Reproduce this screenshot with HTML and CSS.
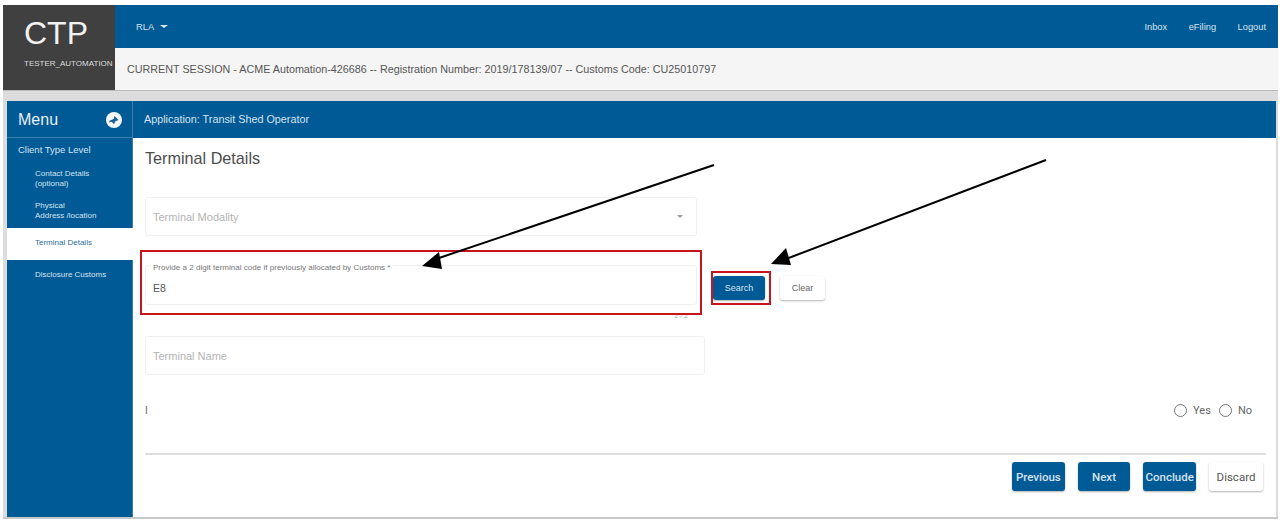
FILE: index.html
```html
<!DOCTYPE html>
<html lang="en">
<head>
<meta charset="utf-8">
<title>CTP - Terminal Details</title>
<link rel="stylesheet" href="styles.css">
</head>
<body>
<div class="app">
  <header class="header">
    <div class="logo">
      <div class="logo-title">CTP</div>
      <div class="logo-user">TESTER_AUTOMATION</div>
    </div>
    <div class="header-main">
      <div class="topbar">
        <div class="org">RLA <span class="caret"></span></div>
        <nav class="toplinks"><span>Inbox</span><span>eFiling</span><span>Logout</span></nav>
      </div>
      <div class="session">CURRENT SESSION - ACME Automation-426686 -- Registration Number: 2019/178139/07 -- Customs Code: CU25010797</div>
    </div>
  </header>
  <div class="workspace">
    <aside class="menu">
      <div class="menu-head">
        <span>Menu</span>
        <svg class="menu-icon" width="16" height="16" viewBox="0 0 16 16"><circle cx="8" cy="8" r="8" fill="#f4f7fa"/><path d="M3.5 8.8 7.6 7 8.6 4l3.9 4-3.4 1.4-1 2.8-2.4-2.4-2.6.8z" fill="#1f5f8f"/></svg>
      </div>
      <div class="menu-level">Client Type Level</div>
      <div class="menu-item two">Contact Details<br>(optional)</div>
      <div class="menu-item two phys">Physical<br>Address /location</div>
      <div class="menu-item active">Terminal Details</div>
      <div class="menu-item last">Disclosure Customs</div>
    </aside>
    <main class="content">
      <div class="app-bar">Application: Transit Shed Operator</div>
      <div class="form">
        <h1 class="title">Terminal Details</h1>
        <div class="field select">
          <span class="placeholder">Terminal Modality</span>
          <span class="select-caret"></span>
        </div>
        <div class="code-row">
          <div class="code-col">
            <div class="field code">
              <span class="legend">Provide a 2 digit terminal code if previously allocated by Customs *</span>
              <span class="value">E8</span>
            </div>
            <div class="counter">2 / 2</div>
          </div>
          <button class="btn primary small search">Search</button>
          <button class="btn small clear">Clear</button>
        </div>
        <div class="field name"><span class="placeholder">Terminal Name</span></div>
        <div class="radio-row">
          <span class="cursor">I</span>
          <div class="radios">
            <span class="radio"></span><span class="radio-label">Yes</span>
            <span class="radio"></span><span class="radio-label">No</span>
          </div>
        </div>
        <div class="actions">
          <button class="btn primary big">Previous</button>
          <button class="btn primary big">Next</button>
          <button class="btn primary big">Conclude</button>
          <button class="btn big discard">Discard</button>
        </div>
      </div>
    </main>
  </div>
</div>
<div class="mark mark-field"></div>
<div class="mark mark-search"></div>
<svg class="arrows" width="1288" height="527" viewBox="0 0 1288 527">
  <path d="M714 165 436 259" stroke="#000" stroke-width="2" fill="none"/>
  <path d="M422 266 439 252 442 269z" fill="#000"/>
  <path d="M1046 160 786 259" stroke="#000" stroke-width="2" fill="none"/>
  <path d="M771 264 786 248 791 265z" fill="#000"/>
</svg>
</body>
</html>
```
FILE: styles.css
```css
* { box-sizing: border-box; }
html, body { margin: 0; height: 527px; overflow: hidden; background: #fff; }
body { font-family: "Liberation Sans", Arial, sans-serif; color: #555; }

.app { display: flex; flex-direction: column; margin: 5px 10px 0 3px; height: 514px; background: #dcdcdc; border-bottom: 2px solid #c8c8c8; }

.header { display: flex; height: 86px; flex: none; border-bottom: 1px solid #bbb; }
.logo { width: 112px; flex: none; background: #404040; color: #fff; padding-left: 21px; }
.logo-title { font-size: 32px; line-height: 36px; margin-top: 10px; color: #f2f2f2; }
.logo-user { font-size: 8px; line-height: 10px; margin-top: 8px; color: #ddd; white-space: nowrap; }
.header-main { flex: 1; display: flex; flex-direction: column; }
.topbar { height: 43px; background: #005a96; color: #d5e3ee; font-size: 9.3px; display: flex; justify-content: space-between; padding: 17px 12px 0 21px; }
.org { line-height: 11px; }
.caret { display: inline-block; margin: 0 0 2px 4px; border: 3px solid transparent; border-top: 3px solid #dfe9f1; border-bottom: 0; border-left-width: 4px; border-right-width: 4px; }
.toplinks { display: flex; gap: 21.5px; line-height: 11px; }
.session { flex: 1; background: #f5f5f5; font-size: 10.78px; color: #555; padding: 15px 0 0 12px; line-height: 12px; white-space: nowrap; }

.workspace { flex: 1; display: flex; margin: 10px 2px 0 4px; min-height: 0; }
.menu { width: 126px; flex: none; background: #005a96; color: #d5e3ee; border-right: 1px solid #3d7fae; }
.menu-head { height: 37px; display: flex; align-items: center; justify-content: space-between; padding: 2px 10px 0 11px; font-size: 16px; color: #e8eff5; border-bottom: 1px solid #3d7fae; }
.menu-level { font-size: 9.5px; line-height: 11px; padding: 6px 0 0 11px; }
.menu-item { font-size: 8px; padding-left: 28px; line-height: 10px; }
.menu-item.two { margin-top: 14px; }
.menu-item.phys { margin-top: 12px; }
.menu-item.active { margin-top: 7px; height: 32px; background: #fff; color: #2c6e9c; line-height: 30px; margin-right: -1px; }
.menu-item.last { margin-top: 10px; }

.content { flex: 1; display: flex; flex-direction: column; background: #fff; min-width: 0; }
.app-bar { height: 37px; flex: none; background: #005a96; color: #d5e3ee; font-size: 10.8px; line-height: 37px; padding-left: 11px; }
.form { flex: 1; padding: 11px 10px 0 12px; display: flex; flex-direction: column; }
.title { margin: 0; font-weight: 400; font-size: 16.2px; line-height: 18px; color: #4d4d4d; }

.field { border: 1px solid #f0f0f0; border-radius: 3px; background: #fff; position: relative; }
.placeholder { display: block; font-size: 11px; color: #b3b3b3; line-height: 12px; }
.select { width: 552px; height: 39px; margin-top: 30px; padding: 13px 8px 0 7px; display: flex; justify-content: space-between; }
.select-caret { width: 0; height: 0; border: 3px solid transparent; border-top: 3px solid #999; border-bottom: 0; margin: 4px 5px 0 0; }

.code-row { display: flex; margin-top: 29px; align-items: flex-start; }
.code-col { width: 552px; flex: none; }
.code { height: 40px; padding: 16px 7px 0; }
.legend { position: absolute; top: -3px; left: 5px; padding: 0 2px; background: #fff; font-size: 8.05px; line-height: 10px; color: #777; white-space: nowrap; }
.value { font-size: 10.5px; color: #555; line-height: 12px; display: block; }
.counter { font-size: 7px; line-height: 8px; color: #aaa; text-align: right; padding-right: 9px; margin-top: 7px; }

.btn { font-family: inherit; border: 0; border-radius: 3px; background: #fff; cursor: pointer; padding: 0; box-shadow: 0 1px 2px rgba(0,0,0,.3); }
.primary { background: #005a96; color: #d5e3ee; }
.small { font-size: 9px; height: 24px; margin-top: 11px; }
.search { width: 52px; margin-left: 16px; }
.clear { width: 45px; margin-left: 15px; color: #666; }

.name { width: 560px; height: 39px; margin-top: 16px; padding: 13px 7px 0; }
.radio-row { display: flex; justify-content: space-between; align-items: center; margin-top: 26px; height: 18px; padding-right: 14px; font-size: 11px; }
.cursor { font-size: 10px; color: #666; }
.radios { display: flex; align-items: center; color: #666; }
.radio { width: 13px; height: 13px; border: 1px solid #777; border-radius: 50%; margin-right: 6px; }
.radio-label { margin-right: 8px; font-family: Roboto, sans-serif; }
.radio-label:last-child { margin-right: 0; }

.actions { border-top: 2px solid #dedede; margin-top: 34px; padding: 7px 3px 0 0; display: flex; justify-content: flex-end; gap: 13px; }
.big { width: 52.67px; height: 29px; font-family: Roboto, sans-serif; font-size: 11.5px; font-weight: 500; }
.discard { width: 54px; color: #555; font-weight: 400; }

.mark { position: absolute; border: 2px solid #c8151b; }
.mark-field { left: 140px; top: 250px; width: 562px; height: 65px; }
.mark-search { left: 711px; top: 271px; width: 60px; height: 34px; }
.arrows { position: absolute; left: 0; top: 0; pointer-events: none; }
```
